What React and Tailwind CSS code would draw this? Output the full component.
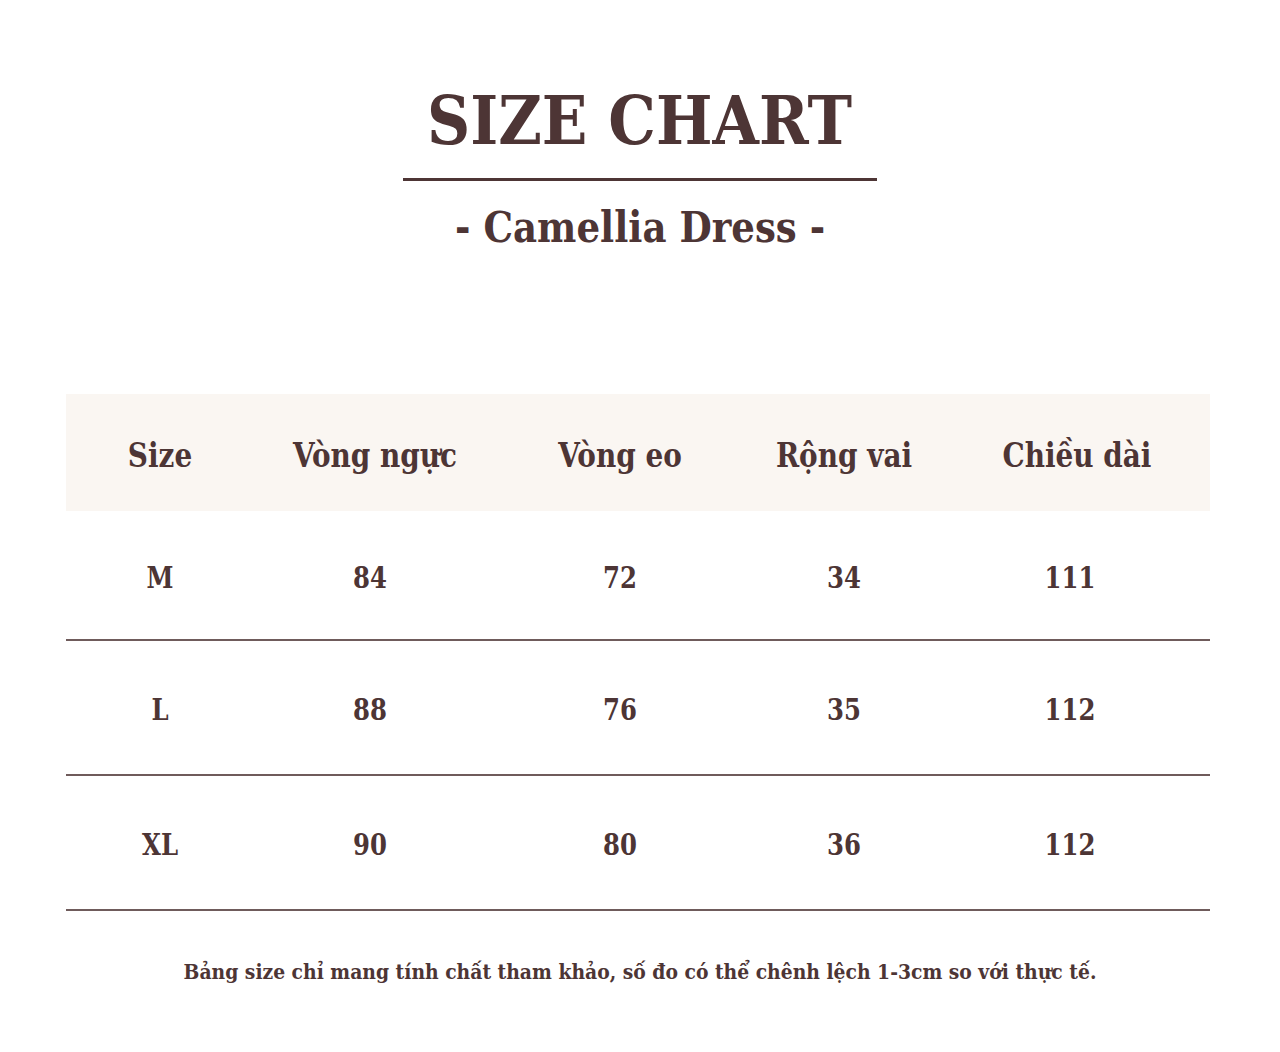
import React from 'react';

const rows = [
  ['M', '84', '72', '34', '111'],
  ['L', '88', '76', '35', '112'],
  ['XL', '90', '80', '36', '112'],
];

const headers = ['Size', 'Vòng ngực', 'Vòng eo', 'Rộng vai', 'Chiều dài'];

// column grids match the chart image (header and values sit a little apart)
const headCols = 'grid grid-cols-[188px_242px_248px_200px_266px]';
const dataCols = 'grid grid-cols-[188px_232px_268px_180px_272px]';

export default function App() {
  return (
    <div className="w-[1280px] h-[1052px] bg-white text-[#4d3535] font-['DejaVu_Serif',serif] overflow-hidden">
      {/* Title */}
      <div className="flex flex-col items-center pt-[80px]">
        <h1 className="text-[68px] leading-[80px] font-bold scale-x-[0.88] whitespace-nowrap">SIZE CHART</h1>
        <div className="mt-[18px] w-[474px] h-[3px] bg-[#4d3535]" />
        <p className="mt-[19px] text-[42px] leading-[56px] font-bold scale-x-[0.885] whitespace-nowrap">- Camellia Dress -</p>
      </div>

      {/* Table */}
      <div className="mt-[138px] ml-[66px] w-[1144px]">
        <div className={`${headCols} h-[117px] items-center bg-[#faf6f2]`}>
          {headers.map((h) => (
            <div key={h} className="pt-[6px] text-center text-[34px] font-bold scale-x-[0.82] whitespace-nowrap">
              {h}
            </div>
          ))}
        </div>
        {rows.map((r, i) => (
          <div
            key={r[0]}
            className={`${dataCols} items-center border-b-2 border-[#6f5b5b] ${i === 0 ? 'h-[130px]' : 'h-[135px]'}`}
          >
            {r.map((v, j) => (
              <div key={j} className="pt-[7px] text-center text-[29px] font-bold scale-x-[0.84]">
                {v}
              </div>
            ))}
          </div>
        ))}
      </div>

      <p className="mt-[45px] text-center text-[21px] font-bold scale-x-[0.893] whitespace-nowrap">
        Bảng size chỉ mang tính chất tham khảo, số đo có thể chênh lệch 1-3cm so với thực tế.
      </p>
    </div>
  );
}
